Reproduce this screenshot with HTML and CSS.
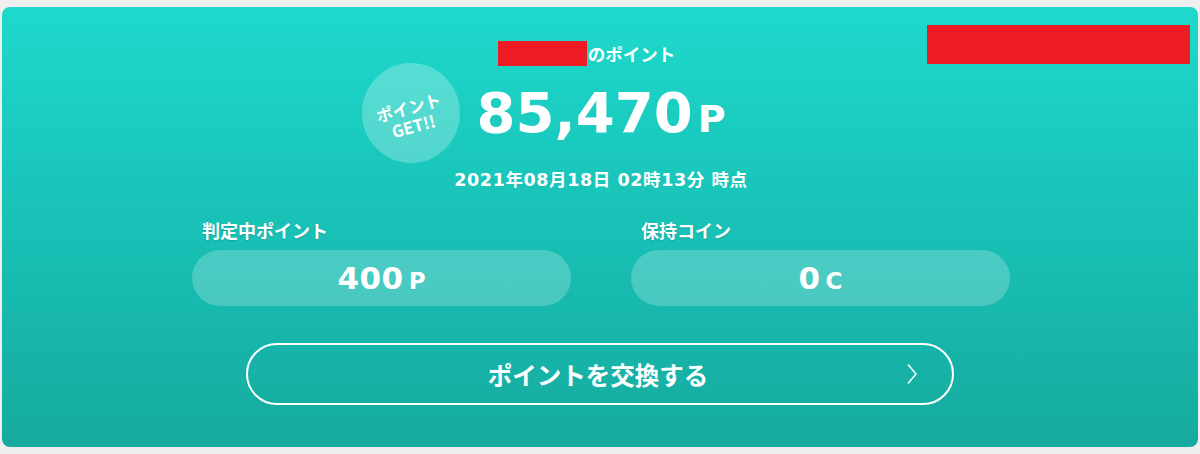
FILE: index.html
```html
<!DOCTYPE html>
<html lang="ja">
<head>
<meta charset="utf-8">
<link rel="stylesheet" href="styles.css">
</head>
<body>
<div class="card">
  <div class="redact-top"></div>
  <div class="owner"><span class="redact-name"></span><span>のポイント</span></div>
  <div class="total-row">
    <div class="badge"><span>ポイント<br>GET!!</span></div>
    <div class="total"><span class="num">85,470</span><span class="unit">P</span></div>
  </div>
  <div class="date">2021年08月18日 02時13分 時点</div>
  <div class="boxes">
    <div class="box">
      <div class="box-label">判定中ポイント</div>
      <div class="pill"><span class="pnum">400</span><span class="punit">P</span></div>
    </div>
    <div class="box">
      <div class="box-label">保持コイン</div>
      <div class="pill"><span class="pnum">0</span><span class="punit">C</span></div>
    </div>
  </div>
  <div class="btn">
    <span class="btn-text">ポイントを交換する</span>
    <svg class="chev" width="12" height="22" viewBox="0 0 12 22"><path d="M2 1.5 L10 11 L2 20.5" fill="none" stroke="#fff" stroke-width="1.5"/></svg>
  </div>
</div>
</body>
</html>
```
FILE: styles.css
```css
html, body { margin: 0; padding: 0; }
body {
  background: #eeeeee;
  width: 1200px;
  height: 454px;
  font-family: "DejaVu Sans", "Noto Sans CJK JP", sans-serif;
  color: #fff;
  padding-top: 7px;
  box-sizing: border-box;
}
.card {
  position: relative;
  margin: 0 2px;
  height: 440px;
  border-radius: 8px;
  background: linear-gradient(180deg, #1ed9cc 0%, #19c3b8 45%, #16aa9f 100%);
  display: flex;
  flex-direction: column;
  align-items: center;
  box-sizing: border-box;
  padding-top: 34px;
}
.redact-top {
  position: absolute;
  top: 18px;
  right: 8px;
  width: 263px;
  height: 39px;
  background: #ed1c24;
}
.owner {
  display: flex;
  align-items: center;
  font-family: "Noto Sans CJK JP", sans-serif;
  font-weight: bold;
  font-size: 17.5px;
  height: 25px;
  line-height: 25px;
  margin-left: -27px;
}
.redact-name {
  display: inline-block;
  width: 89px;
  height: 25px;
  background: #ed1c24;
  margin-right: 1px;
}
.total-row {
  display: flex;
  align-items: center;
  margin-top: -3px;
  margin-left: -113px;
  height: 100px;
}
.badge {
  width: 98px;
  height: 100px;
  border-radius: 50%;
  background: rgba(255,255,255,0.25);
  display: flex;
  align-items: center;
  justify-content: center;
  margin-right: 17px;
}
.badge span {
  font-family: "Noto Sans CJK JP", sans-serif;
  font-weight: bold;
  font-size: 16.5px;
  line-height: 19px;
  text-align: center;
  transform: rotate(-15deg);
  display: block;
  margin-top: 8px;
}
.total {
  display: flex;
  align-items: baseline;
  line-height: 56px;
  height: 56px;
}
.num {
  font-weight: bold;
  font-size: 56px;
}
.unit {
  font-weight: bold;
  font-size: 38px;
  margin-left: 5px;
}
.date {
  font-weight: bold;
  font-size: 17.5px;
  letter-spacing: 0.6px;
  line-height: 20px;
  height: 20px;
  margin-top: 7px;
  margin-left: 2px;
}
.boxes {
  display: flex;
  gap: 60px;
  margin-top: 28px;
  margin-left: 2px;
}
.box { width: 379px; }
.box-label {
  font-family: "Noto Sans CJK JP", sans-serif;
  font-weight: bold;
  font-size: 18px;
  padding-left: 10px;
  height: 24px;
  line-height: 24px;
  text-shadow: 0 1px 1px rgba(0,0,0,0.15);
}
.pill {
  margin-top: 8px;
  height: 56px;
  border-radius: 28px;
  background: rgba(255,255,255,0.22);
  display: flex;
  align-items: baseline;
  justify-content: center;
  line-height: 56px;
}
.pnum { font-weight: bold; font-size: 31px; letter-spacing: 0.5px; }
.punit { font-weight: bold; font-size: 23px; margin-left: 5px; }
.btn {
  position: relative;
  margin-top: 37px;
  width: 708px;
  height: 62px;
  box-sizing: border-box;
  border: 2px solid #fff;
  border-radius: 31px;
  display: flex;
  align-items: center;
  justify-content: center;
}
.btn-text {
  font-family: "Noto Sans CJK JP", sans-serif;
  font-weight: bold;
  font-size: 24.5px;
  margin-left: -4px;
}
.chev {
  position: absolute;
  right: 34px;
  top: 18px;
}
```
